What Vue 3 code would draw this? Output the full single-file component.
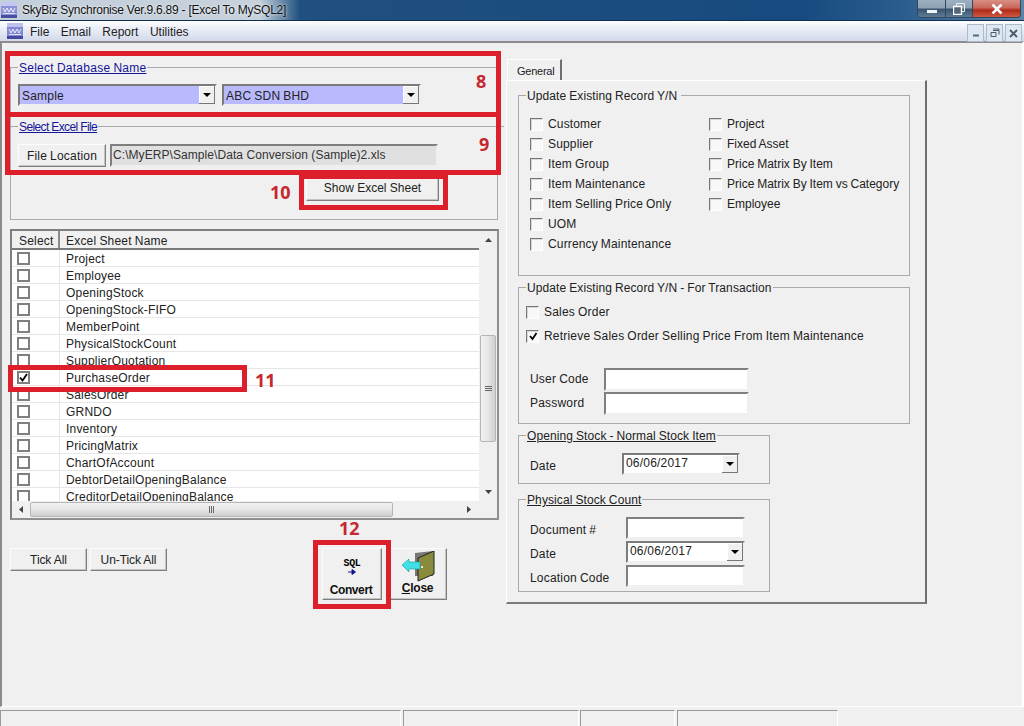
<script setup>
const menus = ['File', 'Email', 'Report', 'Utilities']
const sheets = ['Project', 'Employee', 'OpeningStock', 'OpeningStock-FIFO', 'MemberPoint', 'PhysicalStockCount', 'SupplierQuotation', 'PurchaseOrder', 'SalesOrder', 'GRNDO', 'Inventory', 'PricingMatrix', 'ChartOfAccount', 'DebtorDetailOpeningBalance', 'CreditorDetailOpeningBalance']
const col1 = ['Customer', 'Supplier', 'Item Group', 'Item Maintenance', 'Item Selling Price Only', 'UOM', 'Currency Maintenance']
const col2 = ['Project', 'Fixed Asset', 'Price Matrix By Item', 'Price Matrix By Item vs Category', 'Employee']
const marks = [
  { n: '8', c: 'n8' }, { n: '9', c: 'n9' }, { n: '10', c: 'n10' }, { n: '11', c: 'n11' }, { n: '12', c: 'n12' }
]
const boxes = ['b8', 'b9', 'b10', 'b11', 'b12']
</script>

<template>
  <div class="app">
    <header class="title">
      <svg class="logo tl" viewBox="0 0 16 16"><rect width="16" height="16" fill="#8d92d8"/><rect width="16" height="4" fill="#c4c7ee"/><rect y="13" width="16" height="3" fill="#4a4fa6"/><path d="M2 6l2 4 2-4 2 4 2-4 2 4 2-4" fill="none" stroke="#eef" stroke-width="1"/><path d="M2 11.500h12" stroke="#dfe1f8"/></svg>
      <span class="title-text">SkyBiz Synchronise Ver.9.6.89 - [Excel To MySQL2]</span>
      <div class="caps">
        <div class="cap cmin"><i></i></div>
        <div class="cap cres"><svg width="12" height="12" viewBox="0 0 12 12"><path d="M3.500 .5h8v8h-8z" fill="none" stroke="#e8edf2"/><path d="M.5 3.500h8v8h-8z" fill="#567" stroke="#fff" stroke-width="1.400"/></svg></div>
        <div class="cap cclose"><svg width="12" height="10" viewBox="0 0 12 10"><path d="M1.500 .5l9 9M10.500 .5l-9 9" stroke="#fff" stroke-width="2.600"/></svg></div>
      </div>
    </header>
    <nav class="menu">
      <svg class="logo ml" viewBox="0 0 16 16"><rect width="16" height="16" rx="1" fill="#8287d4"/><rect width="16" height="4" fill="#bcc0ec"/><rect y="13" width="16" height="3" fill="#44499e"/><path d="M2 6l2 4 2-4 2 4 2-4 2 4 2-4" fill="none" stroke="#eef" stroke-width="1"/><path d="M2 11.500h12" stroke="#dfe1f8"/></svg>
      <span v-for="m in menus" :key="m" class="mi">{{ m }}</span>
      <div class="mdi">
        <div class="mb"><svg width="8" height="8" viewBox="0 0 8 8"><path d="M1 6.500h6" stroke="#5a6a7c" stroke-width="2"/></svg></div>
        <div class="mb"><svg width="10" height="10" viewBox="0 0 10 10"><path d="M3 2.500h6v4M3 1h6v1M1 4.500h5v4h-5z" fill="none" stroke="#4a5a6c"/></svg></div>
        <div class="mb"><svg width="9" height="9" viewBox="0 0 9 9"><path d="M1 1l7 7M8 1l-7 7" stroke="#4a5a6c" stroke-width="1.800"/></svg></div>
      </div>
    </nav>

    <main class="client">
      <section class="left-pane">
        <div class="group g-db">
          <span class="legend link big">Select Database Name</span>
          <div class="combo-row">
            <div class="combo lilac w199"><span>Sample</span><b class="drop"><i></i></b></div>
            <div class="combo lilac w199"><span>ABC SDN BHD</span><b class="drop"><i></i></b></div>
          </div>
          <div class="sub">
            <span class="legend link small">Select Excel File</span>
            <div class="file-row">
              <button class="btn file-btn">File Location</button>
              <div class="path">C:\MyERP\Sample\Data Conversion (Sample)2.xls</div>
            </div>
            <button class="btn show-btn">Show Excel Sheet</button>
          </div>
        </div>

        <div class="grid">
          <div class="grid-main">
            <div class="ghead"><span class="gh1">Select</span><span class="gh2">Excel Sheet Name</span></div>
            <div class="grows">
              <div v-for="s in sheets" :key="s" class="grow">
                <span class="gcheck-cell"><span class="gcheck">
                  <svg v-if="s === 'PurchaseOrder'" width="9" height="9" viewBox="0 0 9 9"><path d="M1 4.500l2.500 3L8 1" fill="none" stroke="#000" stroke-width="1.800"/></svg>
                </span></span>
                <span class="gtext">{{ s }}</span>
              </div>
            </div>
          </div>
          <div class="vscroll">
            <span class="sarrow"><svg width="7" height="4" viewBox="0 0 7 4"><path d="M3.500 0L7 4H0z" fill="#444"/></svg></span>
            <div class="vthumb"><i></i><i></i><i></i></div>
            <span class="sarrow down"><svg width="7" height="4" viewBox="0 0 7 4"><path d="M0 0h7L3.500 4z" fill="#444"/></svg></span>
          </div>
          <div class="hscroll">
            <span class="harrow"><svg width="4" height="7" viewBox="0 0 4 7"><path d="M4 0v7L0 3.500z" fill="#444"/></svg></span>
            <div class="hthumb"><i></i><i></i><i></i></div>
            <span class="harrow arrow-r"><svg width="4" height="7" viewBox="0 0 4 7"><path d="M0 0l4 3.500L0 7z" fill="#444"/></svg></span>
          </div>
        </div>

        <div class="actions">
          <button class="btn tick">Tick All</button>
          <button class="btn tick">Un-Tick All</button>
          <button class="btn big-btn convert">
            <span class="sql">SQL<svg width="9" height="6" viewBox="0 0 9 6"><path d="M0 3h6M4 .5L7.500 3 4 5.500z" stroke="#14148c" fill="#14148c"/></svg></span>
            <span class="cap-label">Convert</span>
          </button>
          <button class="btn big-btn close">
            <svg width="34" height="31" viewBox="0 0 34 31">
              <path d="M13 2L31 0v25H13z" fill="#777"/>
              <path d="M16 7L32 0v23l-16 7z" fill="#8a8a3c" stroke="#222"/>
              <path d="M0 14l7-6v3h11v7H7v3z" fill="#3fe0e6" stroke="#1a9aa0" stroke-width=".6"/>
              <circle cx="20" cy="16" r="1.100" fill="#fff"/>
            </svg>
            <span class="cap-label"><u>C</u>lose</span>
          </button>
        </div>
      </section>

      <section class="right-pane">
        <div class="tab">General</div>
        <div class="panel">
          <div class="group g1">
            <span class="legend">Update Existing Record Y/N&nbsp;</span>
            <div class="cols">
              <div class="col c1"><label v-for="c in col1" :key="c" class="chk"><span class="box"></span>{{ c }}</label></div>
              <div class="col c2"><label v-for="c in col2" :key="c" class="chk"><span class="box"></span>{{ c }}</label></div>
            </div>
          </div>
          <div class="group g2">
            <span class="legend">Update Existing Record Y/N - For Transaction</span>
            <label class="chk first"><span class="box"></span>Sales Order</label>
            <label class="chk second"><span class="box"><svg width="10" height="10" viewBox="0 0 10 10"><path d="M2 5l2.500 3L8.500 2" fill="none" stroke="#000" stroke-width="1.800"/></svg></span>Retrieve Sales Order Selling Price From Item Maintenance</label>
            <div class="field f-user"><span class="lbl l74">User Code</span><div class="input w145"></div></div>
            <div class="field"><span class="lbl l74">Password</span><div class="input w145"></div></div>
          </div>
          <div class="group g3">
            <span class="legend under">Opening Stock - Normal Stock Item</span>
            <div class="field f3"><span class="lbl l92">Date</span><div class="combo white w118"><span>06/06/2017</span><b class="drop"><i></i></b></div></div>
          </div>
          <div class="group g4">
            <span class="legend under">Physical Stock Count</span>
            <div class="field f3"><span class="lbl l96">Document #</span><div class="input w119"></div></div>
            <div class="field f4"><span class="lbl l96">Date</span><div class="combo white w119"><span>06/06/2017</span><b class="drop"><i></i></b></div></div>
            <div class="field f4"><span class="lbl l96">Location Code</span><div class="input w119"></div></div>
          </div>
        </div>
      </section>
    </main>

    <footer class="status">
      <div class="sp s1"></div>
      <div class="sp s2"></div>
      <div class="sp s3"></div>
      <div class="sp s4"></div>
    </footer>

    <div v-for="b in boxes" :key="b" class="redbox" :class="b"></div>
    <span v-for="m in marks" :key="m.c" class="mark" :class="m.c">{{ m.n }}</span>
  </div>
</template>

<style>
html, body { margin: 0; background: #f0f0f0; }
</style>

<style scoped>
.app { position: relative; width: 1024px; height: 726px; overflow: hidden; background: #f0f0f0; font: 12px/14px "Liberation Sans", Arial, sans-serif; letter-spacing: .2px; word-spacing: -.5px; color: #222; display: flex; flex-direction: column; }
.title { height: 20px; flex: none; display: flex; align-items: center; background: linear-gradient(90deg, #c3cfdb 0, #c6d1dc 260px, #20507f 300px, #174a80 800px, #2a5c8e 900px, #5d84a8 1024px); border-bottom: 1px solid #0e2f52; position: relative; }
.logo.tl { width: 16px; height: 16px; margin-left: 1px; }
.title-text { margin-left: 5px; letter-spacing: -.24px; word-spacing: 0; color: #111; text-shadow: 0 0 3px #fff; }
.caps { margin-left: auto; margin-right: 3px; align-self: flex-start; display: flex; height: 18px; border: 1px solid #33465c; border-top: 0; border-radius: 0 0 4px 4px; overflow: hidden; box-sizing: border-box; }
.cap { display: flex; align-items: center; justify-content: center; box-sizing: border-box; }
.cmin { width: 28px; background: linear-gradient(#9eb0c0 0, #8ea2b4 45%, #3c5570 55%, #5d7c96 100%); border-right: 1px solid #33465c; }
.cmin i { width: 10px; height: 3px; background: #f2f5f8; margin-top: 5px; }
.cres { width: 27px; background: linear-gradient(#9eb0c0 0, #8ea2b4 45%, #3c5570 55%, #5d7c96 100%); border-right: 1px solid #33465c; }
.cclose { flex: 1; width: 47px; background: linear-gradient(#d98f84 0, #c9675b 45%, #b02a18 60%, #cf5a40 100%); }
.menu { height: 20px; flex: none; display: flex; align-items: center; background: linear-gradient(#fff 0, #eef1f8 30%, #d3d9ea 100%); position: relative; }
.logo.ml { width: 16px; height: 16px; margin-left: 7px; margin-right: 7px; }
.mi { margin-right: 11.500px; letter-spacing: 0; padding-top: 2px; color: #222; }
.mdi { margin-left: auto; margin-right: 2px; display: flex; gap: 2px; align-self: flex-end; }
.mb { width: 17px; height: 18px; margin-bottom: -1px; background: #dde8f3; border: 1px solid #adbccb; box-sizing: border-box; display: flex; align-items: center; justify-content: center; }
.client { flex: none; height: 666px; display: flex; box-sizing: border-box; background: #f0f0f0; border-top: 2px solid #8c8c8c; border-left: 2px solid #8a8a8a; border-bottom: 1px solid #fff; border-right: 2px solid #fff; }
.left-pane { width: 489px; margin-left: 8px; padding-top: 24px; flex: none; }
.group { border: 1px solid #a9a9a9; box-sizing: border-box; }
.legend { display: block; width: fit-content; height: 14px; line-height: 16px; margin: -8px 0 0 7px; padding: 0 1px; background: #f0f0f0; letter-spacing: .1px; color: #222; white-space: nowrap; }
.link { color: #15159a; text-decoration: underline; margin-left: 0; }
.link.big { letter-spacing: .25px; }
.link.small { letter-spacing: -.62px; word-spacing: 0; }
.under { text-decoration: underline; }
.g-db { width: 488px; height: 153px; padding-left: 7px; }
.combo-row { display: flex; gap: 5px; margin-top: 10px; }
.combo { height: 22px; box-sizing: border-box; display: flex; align-items: center; justify-content: space-between; border: 2px solid; border-color: #7b7b7b #efefef #efefef #7b7b7b; padding-left: 2px; color: #222; }
.combo span { margin-top: -2px; }
.lilac { background: #b9b9fd; }
.lilac span { margin-top: 1px; }
.white { background: #fff; }
.w199 { width: 199px; }
.w118 { width: 118px; }
.w119 { width: 119px; }
.drop { width: 16px; height: 100%; background: #f0f0f0; box-shadow: inset -1px -1px 0 #777, inset 1px 1px 0 #fff; display: flex; align-items: center; justify-content: center; }
.drop i { width: 0; height: 0; border: 4px solid transparent; border-top-color: #000; border-bottom: 0; }
.sub { margin: 20px -7px 0; border-top: 1px solid #a9a9a9; padding-left: 7px; }
.file-row { display: flex; gap: 4px; margin-top: 11px; }
.btn { font: inherit; letter-spacing: inherit; word-spacing: inherit; color: #222; background: #f0f0f0; padding: 0; border: 1px solid; border-color: #fcfcfc #7f7f7f #7f7f7f #fcfcfc; box-shadow: inset -1px -1px 0 #c4c4c4; box-sizing: border-box; }
.file-btn { width: 88px; height: 23px; }
.path { width: 328px; height: 23px; background: #e0e0e0; box-sizing: border-box; border: 2px solid; border-color: #7f7f7f #efefef #efefef #7f7f7f; padding: 0 0 3px 1px; line-height: 18px; letter-spacing: .07px; word-spacing: 0; color: #333; }
.show-btn { display: block; width: 133px; height: 25px; margin: 9px 0 0 288px; padding-bottom: 2px; letter-spacing: 0; word-spacing: 0; }
.grid { width: 489px; height: 291px; margin-top: 9px; box-sizing: border-box; border: 2px solid; border-color: #7f7f7f #8f8f8f #8f8f8f #7f7f7f; display: grid; grid-template-columns: 467px 18px; grid-template-rows: 270px 17px; background: #f0f0f0; }
.grid-main { overflow: hidden; background: #fff; }
.ghead { height: 19px; display: flex; background: #f0f0f0; border-bottom: 2px solid #7a7a7a; box-sizing: border-box; line-height: 20px; }
.gh1 { width: 48px; padding-left: 7px; box-sizing: border-box; border-right: 2px solid #8a8a8a; }
.gh2 { padding-left: 6px; }
.grows { height: 251px; overflow: hidden; }
.grow { height: 17px; display: flex; box-sizing: border-box; border-bottom: 1px solid #e6e6e6; }
.gcheck-cell { width: 48px; flex: none; border-right: 1px solid #e6e6e6; box-sizing: border-box; display: flex; padding-left: 5px; padding-top: 2px; }
.gcheck { width: 13px; height: 13px; box-sizing: border-box; border: 2px solid #7f7f7f; background: #fff; display: flex; align-items: center; justify-content: center; }
.gtext { padding-left: 6px; line-height: 18px; }
.vscroll { display: flex; flex-direction: column; align-items: stretch; }
.sarrow { height: 18px; flex: none; display: flex; align-items: center; justify-content: center; }
.vthumb { height: 107px; flex: none; margin: 86px 1px 0; background: linear-gradient(90deg, #f2f2f2, #e6e6e6 50%, #cfcfcf); border: 1px solid #b5b5b5; border-radius: 2px; box-sizing: border-box; display: flex; flex-direction: column; align-items: center; justify-content: center; gap: 1px; }
.vthumb i { width: 7px; height: 1px; background: #666; }
.sarrow.down { margin-top: 41px; }
.hscroll { grid-column: 1 / 3; display: flex; align-items: center; }
.harrow { width: 18px; height: 17px; flex: none; display: flex; align-items: center; justify-content: center; }
.hthumb { width: 363px; height: 15px; flex: none; background: linear-gradient(#f2f2f2, #e6e6e6 50%, #cfcfcf); border: 1px solid #b5b5b5; border-radius: 2px; box-sizing: border-box; display: flex; align-items: center; justify-content: center; gap: 1px; }
.hthumb i { width: 1px; height: 7px; background: #666; }
.arrow-r { margin-left: 67px; }
.actions { display: flex; margin-top: 28px; align-items: flex-start; gap: 3px; }
.tick { width: 77px; height: 23px; letter-spacing: -.1px; word-spacing: 0; }
.big-btn { height: 52px; display: flex; flex-direction: column; align-items: center; }
.convert { width: 60px; margin-left: 152px; }
.close { width: 57px; margin-left: 5px; padding-top: 2px; }
.sql { display: flex; flex-direction: column; align-items: center; font: bold 10px/10px "Liberation Mono", monospace; letter-spacing: -.4px; color: #000; margin-top: 10px; height: 24px; }
.sql svg { display: block; }
.cap-label { font: bold 12px/14px "Liberation Sans", sans-serif; letter-spacing: -.4px; color: #111; margin-top: 0; margin-left: -2px; }
.close .cap-label { margin-top: -1px; letter-spacing: -.2px; }
.right-pane { margin-left: 7px; padding-top: 16px; width: 422px; flex: none; }
.tab { width: 55px; height: 21px; box-sizing: border-box; margin-left: 1px; border-top: 1px solid #fff; border-left: 1px solid #fff; border-right: 2px solid #6f6f6f; padding: 4px 0 0 9px; font-size: 11px; letter-spacing: -.25px; }
.panel { width: 421px; height: 524px; box-sizing: border-box; border-top: 1px solid #fff; border-left: 1px solid #fff; border-right: 2px solid #6e6e6e; border-bottom: 2px solid #7a7a7a; padding: 14px 0 0 11px; }
.g1 { width: 392px; height: 181px; }
.g2 { width: 392px; height: 137px; margin-top: 11px; }
.g3 { width: 252px; height: 49px; margin-top: 11px; }
.g4 { width: 252px; height: 93px; margin-top: 15px; }
.cols { display: flex; margin-top: 12px; padding-left: 11px; }
.col { display: flex; flex-direction: column; }
.c1 { width: 179px; letter-spacing: .15px; }
.c2 { letter-spacing: 0; }
.chk { height: 20px; display: flex; align-items: center; white-space: nowrap; }
.box { width: 13px; height: 13px; flex: none; box-sizing: border-box; margin-right: 5px; background: #f8f8f8; border: 1px solid; border-color: #777 #fff #fff #777; box-shadow: inset 1px 1px 0 #d8d8d8; display: flex; align-items: center; justify-content: center; }
.first { margin: 8px 0 0 7px; }
.second { margin: 4px 0 0 7px; }
.field { display: flex; align-items: center; padding-left: 11px; }
.f3 { margin-top: 11px; }
.f4 { margin-top: 2px; }
.g2 .field { height: 24px; }
.g2 .f-user { margin-top: 21px; }
.lbl { flex: none; }
.g3 .lbl, .g4 .lbl { padding-top: 4px; }
.l74 { width: 74px; }
.l92 { width: 92px; }
.l96 { width: 96px; }
.input { height: 23px; background: #fff; box-sizing: border-box; border: 2px solid; border-color: #7f7f7f #efefef #efefef #7f7f7f; }
.w145 { width: 145px; }
.g4 .input { height: 22px; }
.status { height: 17px; margin-top: 3px; flex: none; display: flex; }
.sp { height: 20px; box-sizing: border-box; border-top: 1px solid #999; border-left: 1px solid #9a9a9a; border-right: 1px solid #fff; }
.s1 { width: 401px; margin-right: 2px; }
.s2 { width: 176px; margin-right: 1px; }
.s3 { width: 95px; margin-right: 2px; }
.s4 { width: 161px; }
.redbox { position: absolute; box-sizing: border-box; border: 5px solid #dd1f2c; }
.b8 { left: 5px; top: 51px; width: 496px; height: 66px; }
.b9 { left: 5px; top: 112px; width: 496px; height: 63px; }
.b10 { left: 299px; top: 174px; width: 149px; height: 36px; }
.b11 { left: 8px; top: 365px; width: 239px; height: 27px; }
.b12 { left: 313px; top: 540px; width: 78px; height: 69px; }
.mark { position: absolute; font: bold 18px/20px "Open Sans", sans-serif; letter-spacing: 0; color: #c5282f; }
.n8 { left: 476px; top: 71px; }
.n9 { left: 479px; top: 134px; }
.n10 { left: 270px; top: 182px; }
.n11 { left: 255px; top: 370px; }
.n12 { left: 339px; top: 518px; }
</style>
